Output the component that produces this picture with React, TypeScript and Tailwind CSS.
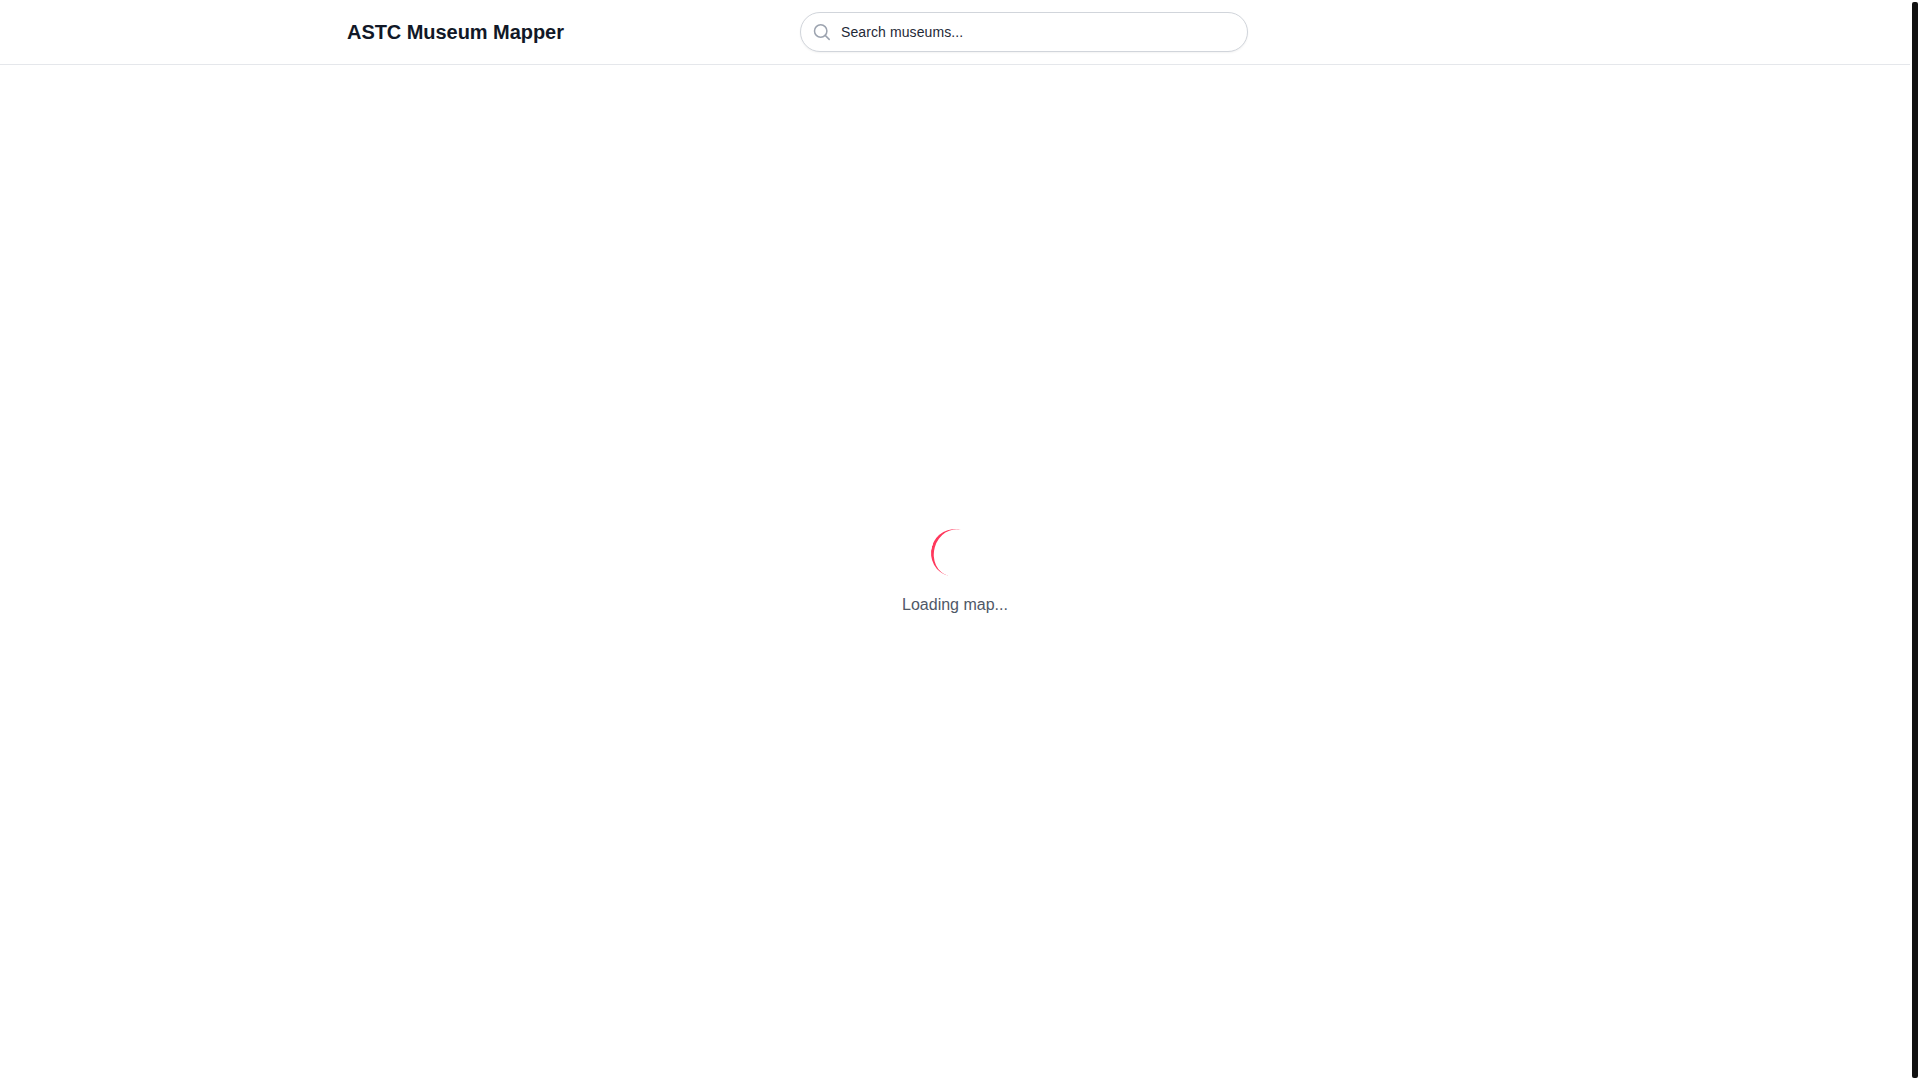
export default function App() {
  return (
    <div className="flex h-screen bg-white font-['Liberation_Sans',sans-serif]">
      <div className="flex flex-1 flex-col min-w-0">
        {/* Header */}
        <header className="h-[65px] border-b border-[#e5e7eb] shrink-0">
          <div className="max-w-7xl mx-auto px-8 h-full flex items-center">
            <h1 className="text-xl font-bold text-[#111827] tracking-[-0.05px] w-[453px] shrink-0">ASTC Museum Mapper</h1>
            <div className="relative w-[448px]">
              <svg className="absolute left-[13px] top-[11px] w-[18px] h-[18px] text-[#9ca3af]" viewBox="0 0 18 18" fill="none" stroke="currentColor" strokeWidth="1.5" strokeLinecap="round">
                <circle cx="7.7" cy="8" r="6.2" />
                <path d="M12.2 12.4l4 4" />
              </svg>
              <input
                type="text"
                placeholder="Search museums..."
                className="w-full h-10 pl-10 pr-4 text-sm tracking-[0.1px] rounded-full border border-[#d1d5db] shadow-[0_1px_2px_rgba(0,0,0,0.05)] bg-white placeholder:text-[#1f2937] outline-none"
              />
            </div>
          </div>
        </header>

        {/* Loading */}
        <main className="flex-1 flex flex-col items-center justify-center">
          <div className="w-12 h-12 rounded-full border-b-[3px] border-[#ff385c] rotate-[106deg]" />
          <p className="mt-4 text-base text-[#4f5867]">Loading map...</p>
        </main>
      </div>

      {/* Scrollbar */}
      <div className="w-2.5 shrink-0 px-0.5 py-0.5">
        <div className="h-full w-full rounded-[2px] bg-[#111111]" />
      </div>
    </div>
  );
}
